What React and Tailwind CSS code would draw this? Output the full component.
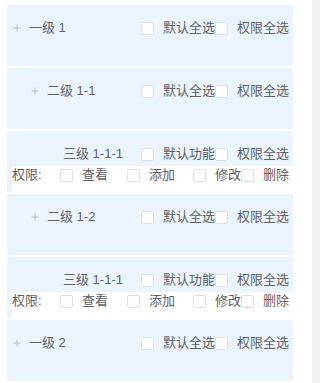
import React from 'react';

const Box = () => (
    <span className="inline-block w-[13px] h-[13px] border border-[#dcdfe6] rounded-[2px] bg-white shrink-0" />
);

const Plus = () => (
    <svg width="8" height="8" viewBox="0 0 8 8" className="shrink-0">
        <path d="M4 0.5V7.5M0.5 4H7.5" stroke="#b8bcc4" strokeWidth="1" />
    </svg>
);

const Checks = ({ first }) => (
    <div className="flex items-center">
        <Box />
        <span className="ml-[9px] w-[52px] whitespace-nowrap">{first}</span>
        <Box />
        <span className="ml-[9px] whitespace-nowrap">权限全选</span>
    </div>
);

const NodeRow = ({ label, indent }) => (
    <div className="bg-[#ecf5ff] h-[61px] pt-[14px]">
        <div className="flex items-center h-[18px] leading-[18px]">
            <div className="w-[134px] flex items-center" style={{ paddingLeft: indent }}>
                <Plus />
                <span className="ml-[8px] whitespace-nowrap">{label}</span>
            </div>
            <Checks first="默认全选" />
        </div>
    </div>
);

const perms = [
    { label: '查看', mr: 'mr-[19px]' },
    { label: '添加', mr: 'mr-[18px]' },
    { label: '修改', mr: 'mr-0' },
    { label: '删除', mr: 'mr-0' },
];

const LeafRow = ({ label }) => (
    <div className="bg-[#ecf5ff] h-[61px] pt-[14px]">
        <div className="flex items-center h-[18px] leading-[18px]">
            <div className="w-[134px] pl-[56px] whitespace-nowrap">{label}</div>
            <Checks first="默认功能" />
        </div>
        <div className="bg-white ml-[5px] mt-[3px] h-[26px]">
            <div className="flex items-center h-[18px] leading-[18px]">
                <span className="w-[48px] whitespace-nowrap">权限:</span>
                {perms.map((p) => (
                    <div key={p.label} className={`flex items-center ${p.mr}`}>
                        <Box />
                        <span className="ml-[9px] whitespace-nowrap">{p.label}</span>
                    </div>
                ))}
            </div>
        </div>
    </div>
);

export default function App() {
    return (
        <div
            className="flex h-[383px] w-[320px] overflow-hidden bg-white text-[13px] text-[#606266]"
            style={{ fontFamily: '"Liberation Sans", "Noto Sans CJK SC", sans-serif' }}
        >
            <div className="w-[312px] pl-[7px] pr-[19px] pt-[5px]">
                <div className="flex flex-col gap-[2px]">
                    <NodeRow label="一级 1" indent={6} />
                    <NodeRow label="二级 1-1" indent={24} />
                    <LeafRow label="三级 1-1-1" />
                    <NodeRow label="二级 1-2" indent={24} />
                    <LeafRow label="三级 1-1-1" />
                    <NodeRow label="一级 2" indent={6} />
                </div>
            </div>
            <div className="w-[8px] h-full bg-[#f1f1f1]" />
        </div>
    );
}
